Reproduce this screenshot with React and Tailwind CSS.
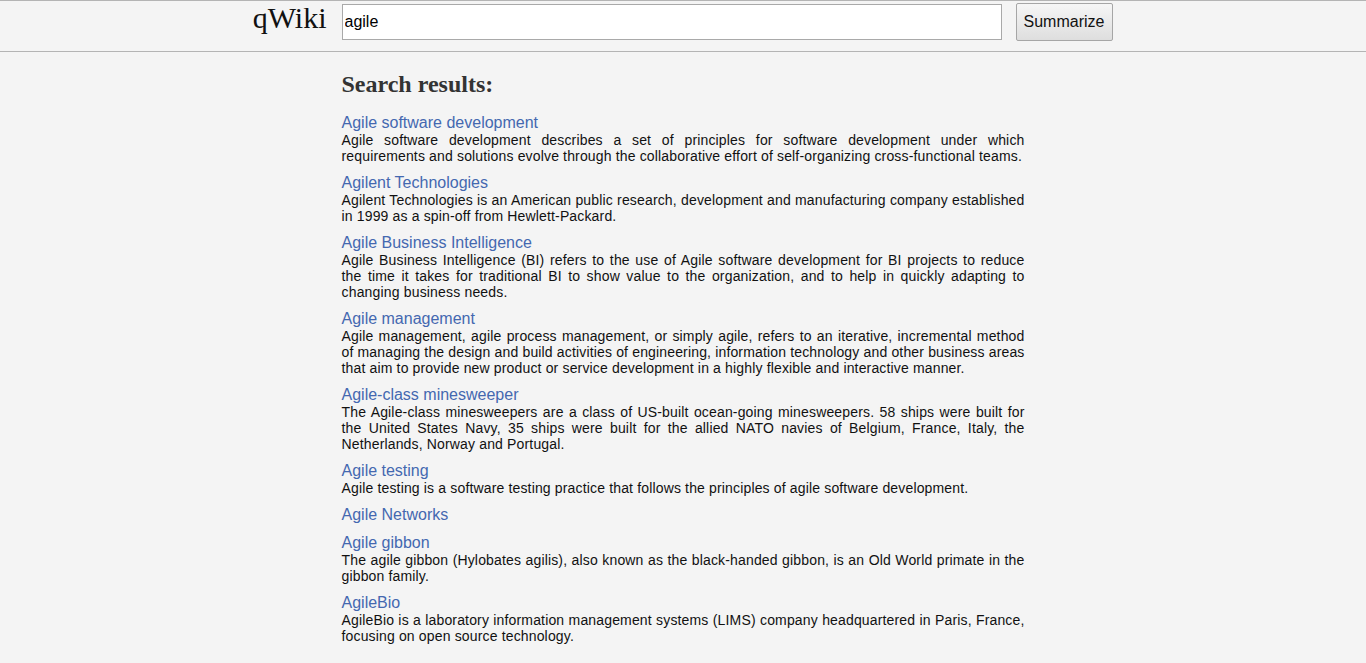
import React from "react";

const results = [
  {
    title: "Agile software development",
    desc: "Agile software development describes a set of principles for software development under which requirements and solutions evolve through the collaborative effort of self-organizing cross-functional teams.",
  },
  {
    title: "Agilent Technologies",
    desc: "Agilent Technologies is an American public research, development and manufacturing company established in 1999 as a spin-off from Hewlett-Packard.",
  },
  {
    title: "Agile Business Intelligence",
    desc: "Agile Business Intelligence (BI) refers to the use of Agile software development for BI projects to reduce the time it takes for traditional BI to show value to the organization, and to help in quickly adapting to changing business needs.",
    wide: true,
  },
  {
    title: "Agile management",
    desc: "Agile management, agile process management, or simply agile, refers to an iterative, incremental method of managing the design and build activities of engineering, information technology and other business areas that aim to provide new product or service development in a highly flexible and interactive manner.",
  },
  {
    title: "Agile-class minesweeper",
    desc: "The Agile-class minesweepers are a class of US-built ocean-going minesweepers. 58 ships were built for the United States Navy, 35 ships were built for the allied NATO navies of Belgium, France, Italy, the Netherlands, Norway and Portugal.",
  },
  {
    title: "Agile testing",
    desc: "Agile testing is a software testing practice that follows the principles of agile software development.",
  },
  { title: "Agile Networks", desc: "" },
  {
    title: "Agile gibbon",
    desc: "The agile gibbon (Hylobates agilis), also known as the black-handed gibbon, is an Old World primate in the gibbon family.",
  },
  {
    title: "AgileBio",
    desc: "AgileBio is a laboratory information management systems (LIMS) company headquartered in Paris, France, focusing on open source technology.",
  },
];

export default function App() {
  return (
    <div className="min-h-[663px] bg-[#f4f4f4] font-['Liberation_Sans',Arial,sans-serif] text-[#111]">
      <header className="flex items-center border-t border-b border-[#b4b4b4] pt-[2px] pb-[10px]">
        <div className="w-[25%] pr-[15px] text-right self-start mt-[1px]">
          <span className="font-['Liberation_Serif','Times_New_Roman',serif] text-[30px] leading-[28px] text-[#111]">
            qWiki
          </span>
        </div>
        <input
          type="text"
          defaultValue="agile"
          className="w-[660px] h-[36px] bg-white border border-[#a9a9a9] px-[2px] text-[16px] text-black outline-none font-['Liberation_Sans',Arial,sans-serif]"
        />
        <button className="ml-[14px] w-[97px] h-[38px] rounded-[2px] border border-[#a6a6a6] bg-gradient-to-b from-[#f6f6f6] to-[#dedede] text-[16px] text-[#111] font-['Liberation_Sans',Arial,sans-serif]">
          Summarize
        </button>
      </header>
      <main className="w-[683px] mx-auto pt-[18px] pb-[20px]">
        <h2 className="font-['Liberation_Serif','Times_New_Roman',serif] font-bold text-[24px] leading-[28px] text-[#333] mb-[16px]">
          Search results:
        </h2>
        <div className="flex flex-col gap-[10px]">
          {results.map((r) => (
            <div key={r.title}>
              <a className="block text-[16px] leading-[18px] text-[#4468b0] cursor-pointer">
                {r.title}
              </a>
              {r.desc && (
                <p
                  className={
                    r.wide
                      ? "text-[14px] leading-[16px] tracking-[0.17px] text-justify text-[#111]"
                      : "text-[14px] leading-[16px] tracking-[0.155px] text-justify text-[#111]"
                  }
                >
                  {r.desc}
                </p>
              )}
            </div>
          ))}
        </div>
      </main>
    </div>
  );
}
